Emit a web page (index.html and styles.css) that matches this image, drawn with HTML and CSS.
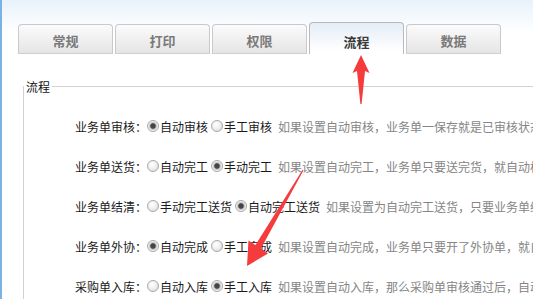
FILE: index.html
```html
<!DOCTYPE html>
<html lang="zh">
<head>
<meta charset="utf-8">
<title>流程设置</title>
<link rel="stylesheet" href="styles.css">
</head>
<body>
<div class="page">
  <div class="tabs">
    <div class="tab">常规</div>
    <div class="tab">打印</div>
    <div class="tab">权限</div>
    <div class="tab active">流程</div>
    <div class="tab">数据</div>
  </div>
  <fieldset class="box">
    <legend class="legend">流程</legend>
    <div class="row">
      <span class="lbl">业务单审核：</span>
      <label class="opt"><input type="radio" name="r1" class="radio" checked>自动审核</label>
      <label class="opt"><input type="radio" name="r1" class="radio">手工审核</label>
      <span class="desc">如果设置自动审核，业务单一保存就是已审核状态。</span>
    </div>
    <div class="row">
      <span class="lbl">业务单送货：</span>
      <label class="opt"><input type="radio" name="r2" class="radio">自动完工</label>
      <label class="opt"><input type="radio" name="r2" class="radio" checked>手动完工</label>
      <span class="desc">如果设置自动完工，业务单只要送完货，就自动标记为完工。</span>
    </div>
    <div class="row">
      <span class="lbl">业务单结清：</span>
      <label class="opt"><input type="radio" name="r3" class="radio">手动完工送货</label>
      <label class="opt"><input type="radio" name="r3" class="radio" checked>自动完工送货</label>
      <span class="desc">如果设置为自动完工送货，只要业务单结清，就自动完工送货。</span>
    </div>
    <div class="row">
      <span class="lbl">业务单外协：</span>
      <label class="opt"><input type="radio" name="r4" class="radio" checked>自动完成</label>
      <label class="opt"><input type="radio" name="r4" class="radio">手工完成</label>
      <span class="desc">如果设置自动完成，业务单只要开了外协单，就自动完成外协。</span>
    </div>
    <div class="row">
      <span class="lbl">采购单入库：</span>
      <label class="opt"><input type="radio" name="r5" class="radio">自动入库</label>
      <label class="opt"><input type="radio" name="r5" class="radio" checked>手工入库</label>
      <span class="desc">如果设置自动入库，那么采购单审核通过后，自动入库。</span>
    </div>
  </fieldset>
  <svg class="arrows" width="533" height="299" viewBox="0 0 533 299" xmlns="http://www.w3.org/2000/svg">
    <path d="M361 55 L369.5 73 L365 71 L361.6 104 L360.4 104 L357 71 L352.5 73 Z" fill="#f53b3b"/>
    <path d="M247 266 L268 253.5 L261 248.5 L303.5 170.3 L302.6 169.7 L255.5 245 L248.5 240.5 Z" fill="#f53b3b"/>
  </svg>
</div>
</body>
</html>
```
FILE: styles.css
```css
html, body {
  margin: 0;
  padding: 0;
}
body {
  width: 533px;
  height: 299px;
  overflow: hidden;
  font-family: "Noto Sans CJK SC", "Noto Sans", sans-serif;
  font-size: 12px;
  color: #1a1a1a;
  background: #fff;
}
.page {
  position: relative;
  height: 299px;
  overflow: hidden;
  border-left: 2px solid #7ab3e3;
  background: linear-gradient(#e8f2fb 0px, #fdfeff 30px, #ffffff 40px);
  padding-top: 23px;
  box-sizing: border-box;
}
.tabs {
  display: flex;
  align-items: flex-end;
  gap: 2px;
  padding-left: 16px;
  height: 31px;
}
.tab {
  width: 93px;
  height: 28px;
  border: 1px solid #c9c9c9;
  border-bottom: 1px solid #cfcfcf;
  border-radius: 4px 4px 0 0;
  background: linear-gradient(#fbfbfb, #e5e5e5);
  color: #7a7a7a;
  font-weight: bold;
  font-size: 13px;
  line-height: 32px;
  text-align: center;
  box-sizing: content-box;
}
.tab.active {
  height: 31px;
  border-color: #b9b9b9;
  border-bottom: none;
  background: linear-gradient(#e4edf7, #ffffff 28px);
  color: #3a3a3a;
  line-height: 38px;
}
.box {
  margin: 25px 0 0 21px;
  padding: 0;
  width: 510px;
  height: 220px;
  border: 1px solid #d2d2d2;
  border-right: none;
  border-bottom: none;
  box-sizing: border-box;
  min-width: 0;
  overflow: hidden;
}
.legend {
  margin-left: 0;
  padding: 0 2px;
  font-size: 12px;
  line-height: 15px;
  color: #111;
}
.row {
  display: flex;
  align-items: center;
  height: 40px;
  white-space: nowrap;
  overflow: hidden;
}
.row:first-of-type {
  margin-top: 12px;
}
.lbl {
  width: 123px;
  text-align: right;
  flex: none;
  color: #1a1a1a;
}
.opt {
  display: flex;
  align-items: center;
  flex: none;
  margin-right: 3px;
  color: #1a1a1a;
}
.radio {
  appearance: none;
  -webkit-appearance: none;
  width: 12px;
  height: 12px;
  margin: 0 1px 1px 0;
  border: 1px solid #a9a9a9;
  border-radius: 50%;
  background: radial-gradient(circle at 40% 35%, #ffffff 0, #f2f2f2 40%, #d4d4d4 100%);
  box-sizing: border-box;
  flex: none;
}
.radio:checked {
  background: radial-gradient(circle at 50% 50%, #3d3d3d 0, #4a4a4a 2.3px, #bdbdbd 3.2px, #efefef 4.5px, #d6d6d6 100%);
}
.desc {
  margin-left: 3px;
  color: #858585;
  min-width: 0;
  overflow: hidden;
  text-overflow: clip;
}
.arrows {
  position: absolute;
  left: -2px;
  top: 0;
  pointer-events: none;
}
```
